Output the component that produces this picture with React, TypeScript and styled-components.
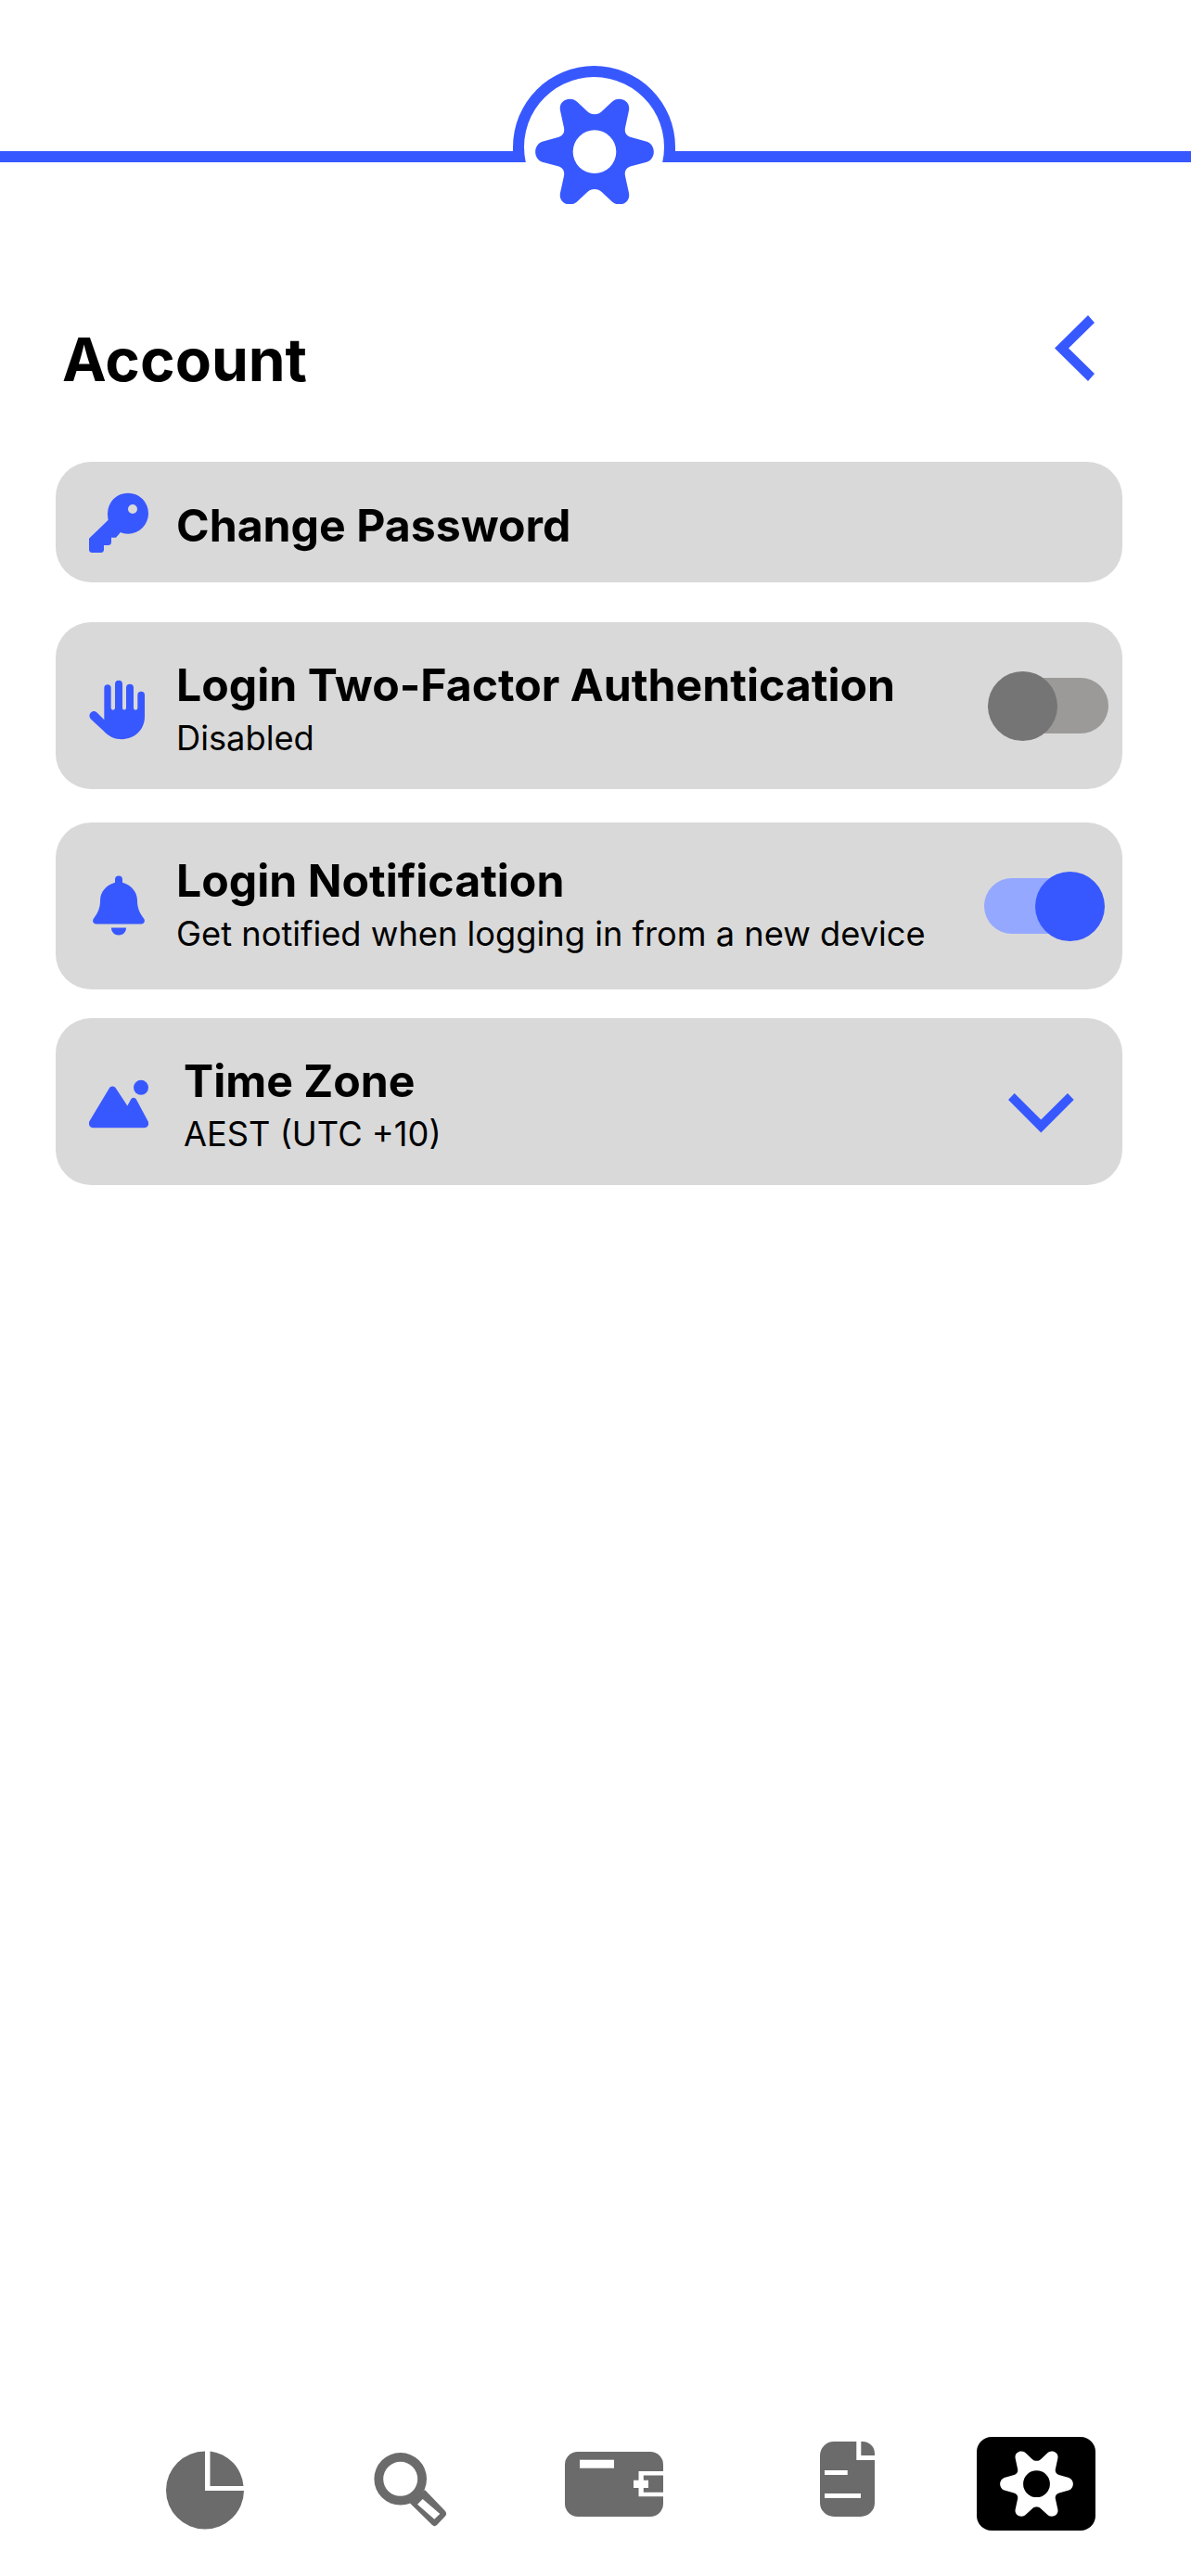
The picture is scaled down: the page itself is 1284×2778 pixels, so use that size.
import styled, { createGlobalStyle } from 'styled-components'

const BLUE = '#3858ff'
const GREY = '#6b6b6b'

const GEAR =
  'M423 219C432 219 440 216 446 210L478 180C499 158 541 172 534 207L522 262C519 278 526 288 541 293L592 307C622 318 622 362 592 373L541 387C526 392 519 402 522 418L534 473C541 508 499 522 478 500L446 470C440 464 432 461 423 461C414 461 406 464 400 470L368 500C347 522 305 508 312 473L324 418C327 402 320 392 305 387L254 373C224 362 224 318 254 307L305 293C320 288 327 278 324 262L312 207C305 172 347 158 368 180L400 210C406 216 414 219 423 219ZM423 270A70 70 0 1 0 423 410A70 70 0 1 0 423 270Z'

function KeyIcon() {
  return (
    <IconSlot viewBox="138 99 192 240">
      <path
        fillRule="evenodd"
        d="M264 125A66 66 0 0 1 264 257C254 257 246 255 240 252L225 269H210V284C210 290 206 294 200 294H186V308C186 314 182 318 176 318H148C142 318 138 314 138 308V272L200 212C199 206 198 198 198 191A66 66 0 0 1 264 125ZM279 162A15 15 0 1 0 279 192A15 15 0 1 0 279 162Z"
      />
    </IconSlot>
  )
}

function HandIcon() {
  return (
    <IconSlot viewBox="138 691.5 192 240">
      <path d="M187 754a11 11 0 0 1 22 0V819a6.5 6.5 0 0 0 13 0V742a12 12 0 0 1 24 0V819a6 6 0 0 0 12 0V754a12 12 0 0 1 24 0V819a6.5 6.5 0 0 0 13 0V777a11.5 11.5 0 0 1 23 0V847C318 890 285 920 245 920C220 920 200 910 185 893L143 854C132 842 148 822 163 833L187 857Z" />
    </IconSlot>
  )
}

function BellIcon() {
  return (
    <IconSlot viewBox="138 169.5 192 240">
      <path d="M222 214V204a12 12 0 0 1 24 0V214C274 222 294 244 294 272C294 296 302 312 315 330C321 338 316 348 307 348H161C152 348 147 338 153 330C166 312 174 296 174 272C174 244 194 222 222 214Z" />
      <path d="M210 360H258C258 374 248 384 234 384C220 384 210 374 210 360Z" />
    </IconSlot>
  )
}

function PictureIcon() {
  return (
    <IconSlot viewBox="138 802.5 192 240">
      <circle cx="306" cy="877" r="24" />
      <path d="M150 1007C140 1007 134 995 140 985L203 880C208 871 220 871 225 880L262 936L273 916C277 908 287 908 291 916L328 985C334 995 328 1007 318 1007Z" />
    </IconSlot>
  )
}

function Toggle({ on }: { on: boolean }) {
  return (
    <ToggleBox $on={on}>
      <Track $on={on} />
      <Knob $on={on} />
    </ToggleBox>
  )
}

export default function App() {
  return (
    <Page>
      <GlobalStyle />
      <TopBar>
        <LeftRule />
        <svg width="175" height="149" viewBox="553 71 175 149" fill={BLUE}>
          <path d="M553 175V158.5A87.5 87.5 0 0 1 728 158.5V175H714.2A75.5 75.5 0 1 0 566.8 175Z" />
          <path
            fillRule="evenodd"
            transform="translate(577 106) scale(.3333) translate(-231 -167)"
            d={GEAR}
          />
        </svg>
        <RightRule />
      </TopBar>

      <Content>
        <TitleRow>
          <Title>Account</Title>
          <svg width="44" height="71" viewBox="0 0 44 71" fill={BLUE}>
            <polygon points="36,0 43,8 15,35.5 43,63 36,71 0,35.5" />
          </svg>
        </TitleRow>

        <Card $height={130}>
          <KeyIcon />
          <CardText $shift={8}>
            <CardTitle>Change Password</CardTitle>
          </CardText>
        </Card>

        <Card $height={180} $gap={43}>
          <HandIcon />
          <CardText $shift={11}>
            <CardTitle>Login Two-Factor Authentication</CardTitle>
            <CardSub>Disabled</CardSub>
          </CardText>
          <Toggle on={false} />
        </Card>

        <Card $height={180} $gap={36}>
          <BellIcon />
          <CardText $shift={1}>
            <CardTitle>Login Notification</CardTitle>
            <CardSub>Get notified when logging in from a new device</CardSub>
          </CardText>
          <Toggle on />
        </Card>

        <Card $height={180} $gap={31}>
          <PictureIcon />
          <CardText $indent={8} $shift={11}>
            <CardTitle>Time Zone</CardTitle>
            <CardSub>AEST (UTC +10)</CardSub>
          </CardText>
          <DownChevron width="71" height="43" viewBox="0 0 71 43" fill={BLUE}>
            <polygon points="6.7,0 0,7 35.3,42.4 70.7,7 64,0 35.3,28.5" />
          </DownChevron>
        </Card>
      </Content>

      <Nav>
        <NavIcon width="85" height="101" viewBox="179 2628 85 101" fill={GREY}>
          <path d="M221 2643.5A42 42 0 1 0 263 2686H221Z" />
          <path d="M226.5 2643.5A41 41 0 0 1 262.5 2681H226.5Z" />
        </NavIcon>

        <NavIcon $gap={139} width="79" height="101" viewBox="403 2628 79 101" fill={GREY}>
          <path
            fillRule="evenodd"
            d="M431.7 2645A28.3 28.3 0 1 1 431.7 2701.6A28.3 28.3 0 1 1 431.7 2645ZM431.7 2654.8A18.5 18.5 0 1 0 431.7 2691.8A18.5 18.5 0 1 0 431.7 2654.8Z"
          />
          <path
            fillRule="evenodd"
            d="M458 2685L480 2708C481.5 2710 481.5 2712 480 2713.5L471 2723C469.5 2724.5 467.5 2724.5 466 2723L442 2699.5ZM455.7 2695L450 2700.7L468.3 2716.7L474.3 2711Z"
          />
        </NavIcon>

        <NavIcon $gap={127} width="106" height="101" viewBox="609 2628 106 101" fill={GREY}>
          <rect x="609" y="2644" width="106" height="70" rx="14" />
          <rect x="625" y="2652.7" width="37" height="9" fill="#fff" />
          <polygon
            fill="#fff"
            points="715,2665 688.5,2665 688.5,2674.7 683,2674.7 683,2683 688.5,2683 688.5,2692.3 715,2692.3 715,2687.7 693.8,2687.7 693.8,2683 699,2683 699,2674.7 693.8,2674.7 693.8,2669.5 715,2669.5"
          />
        </NavIcon>

        <NavIcon $gap={169} width="59" height="101" viewBox="884 2628 59 101" fill={GREY}>
          <path d="M899 2633H923.3V2653H943V2699A15 15 0 0 1 928 2714H899A15 15 0 0 1 884 2699V2648A15 15 0 0 1 899 2633Z" />
          <path d="M928.3 2633H930A13 13 0 0 1 943 2646V2648H928.3Z" />
          <rect x="889" y="2664" width="24.7" height="5" fill="#fff" />
          <rect x="889" y="2689" width="39" height="5" fill="#fff" />
        </NavIcon>

        <ActiveTab>
          <svg width="79" height="71" viewBox="231 167 384 344" fill="#fff">
            <path fillRule="evenodd" d={GEAR} />
          </svg>
        </ActiveTab>
      </Nav>
    </Page>
  )
}

const GlobalStyle = createGlobalStyle`
  html, body {
    margin: 0;
    padding: 0;
    background: #fff;
  }
  body {
    font-family: Inter, "Liberation Sans", sans-serif;
    color: #000;
  }
`

const Page = styled.div`
  width: 1284px;
  height: 2778px;
  display: flex;
  flex-direction: column;
  overflow: hidden;
`

const TopBar = styled.header`
  display: flex;
  align-items: flex-start;
  padding-top: 71px;
`

const LeftRule = styled.div`
  width: 553px;
  height: 12px;
  margin-top: 92px;
  background: ${BLUE};
`

const RightRule = styled(LeftRule)`
  width: auto;
  flex: 1;
`

const Content = styled.main`
  display: flex;
  flex-direction: column;
  padding: 0 74px 0 60px;
`

const TitleRow = styled.div`
  height: 158px;
  margin-top: 120px;
  padding: 0 29px 0 7px;
  display: flex;
  justify-content: space-between;
  align-items: flex-start;
`

const Title = styled.h1`
  margin: 9px 0 0;
  font-size: 64px;
  line-height: 78px;
  font-weight: 700;
`

const Card = styled.section<{ $height: number; $gap?: number }>`
  height: ${(p) => p.$height}px;
  margin-top: ${(p) => p.$gap ?? 0}px;
  padding-left: 36px;
  display: flex;
  align-items: center;
  background: #d9d9d9;
  border-radius: 38px;
`

const IconSlot = styled.svg`
  width: 64px;
  height: 80px;
  flex: none;
  fill: ${BLUE};
`

const CardText = styled.div<{ $indent?: number; $shift?: number }>`
  margin-left: ${(p) => 30 + (p.$indent ?? 0)}px;
  margin-top: ${(p) => p.$shift ?? 0}px;
  display: flex;
  flex-direction: column;
`

const CardTitle = styled.div`
  font-size: 48.2px;
  line-height: 58px;
  font-weight: 700;
`

const CardSub = styled.div`
  font-size: 36.25px;
  line-height: 56px;
  font-weight: 400;
`

const ToggleBox = styled.div<{ $on: boolean }>`
  position: relative;
  width: 130px;
  height: 75px;
  margin-left: auto;
  margin-right: ${(p) => (p.$on ? 19 : 15)}px;
`

const Track = styled.div<{ $on: boolean }>`
  position: absolute;
  top: 7px;
  left: ${(p) => (p.$on ? 0 : 7)}px;
  width: 123px;
  height: 60px;
  border-radius: 30px;
  background: ${(p) => (p.$on ? '#94a8ff' : '#9b9a98')};
`

const Knob = styled.div<{ $on: boolean }>`
  position: absolute;
  top: 0;
  left: ${(p) => (p.$on ? 55 : 0)}px;
  width: 75px;
  height: 75px;
  border-radius: 50%;
  background: ${(p) => (p.$on ? BLUE : '#757575')};
`

const DownChevron = styled.svg`
  margin: 25px 52px 0 auto;
`

const Nav = styled.nav`
  margin-top: auto;
  margin-bottom: 49px;
  padding-left: 179px;
  display: flex;
  align-items: flex-start;
`

const NavIcon = styled.svg<{ $gap?: number }>`
  flex: none;
  margin-left: ${(p) => p.$gap ?? 0}px;
`

const ActiveTab = styled.div`
  width: 128px;
  height: 101px;
  margin-left: 110px;
  display: flex;
  align-items: center;
  justify-content: center;
  background: #000;
  border-radius: 16px;
`
